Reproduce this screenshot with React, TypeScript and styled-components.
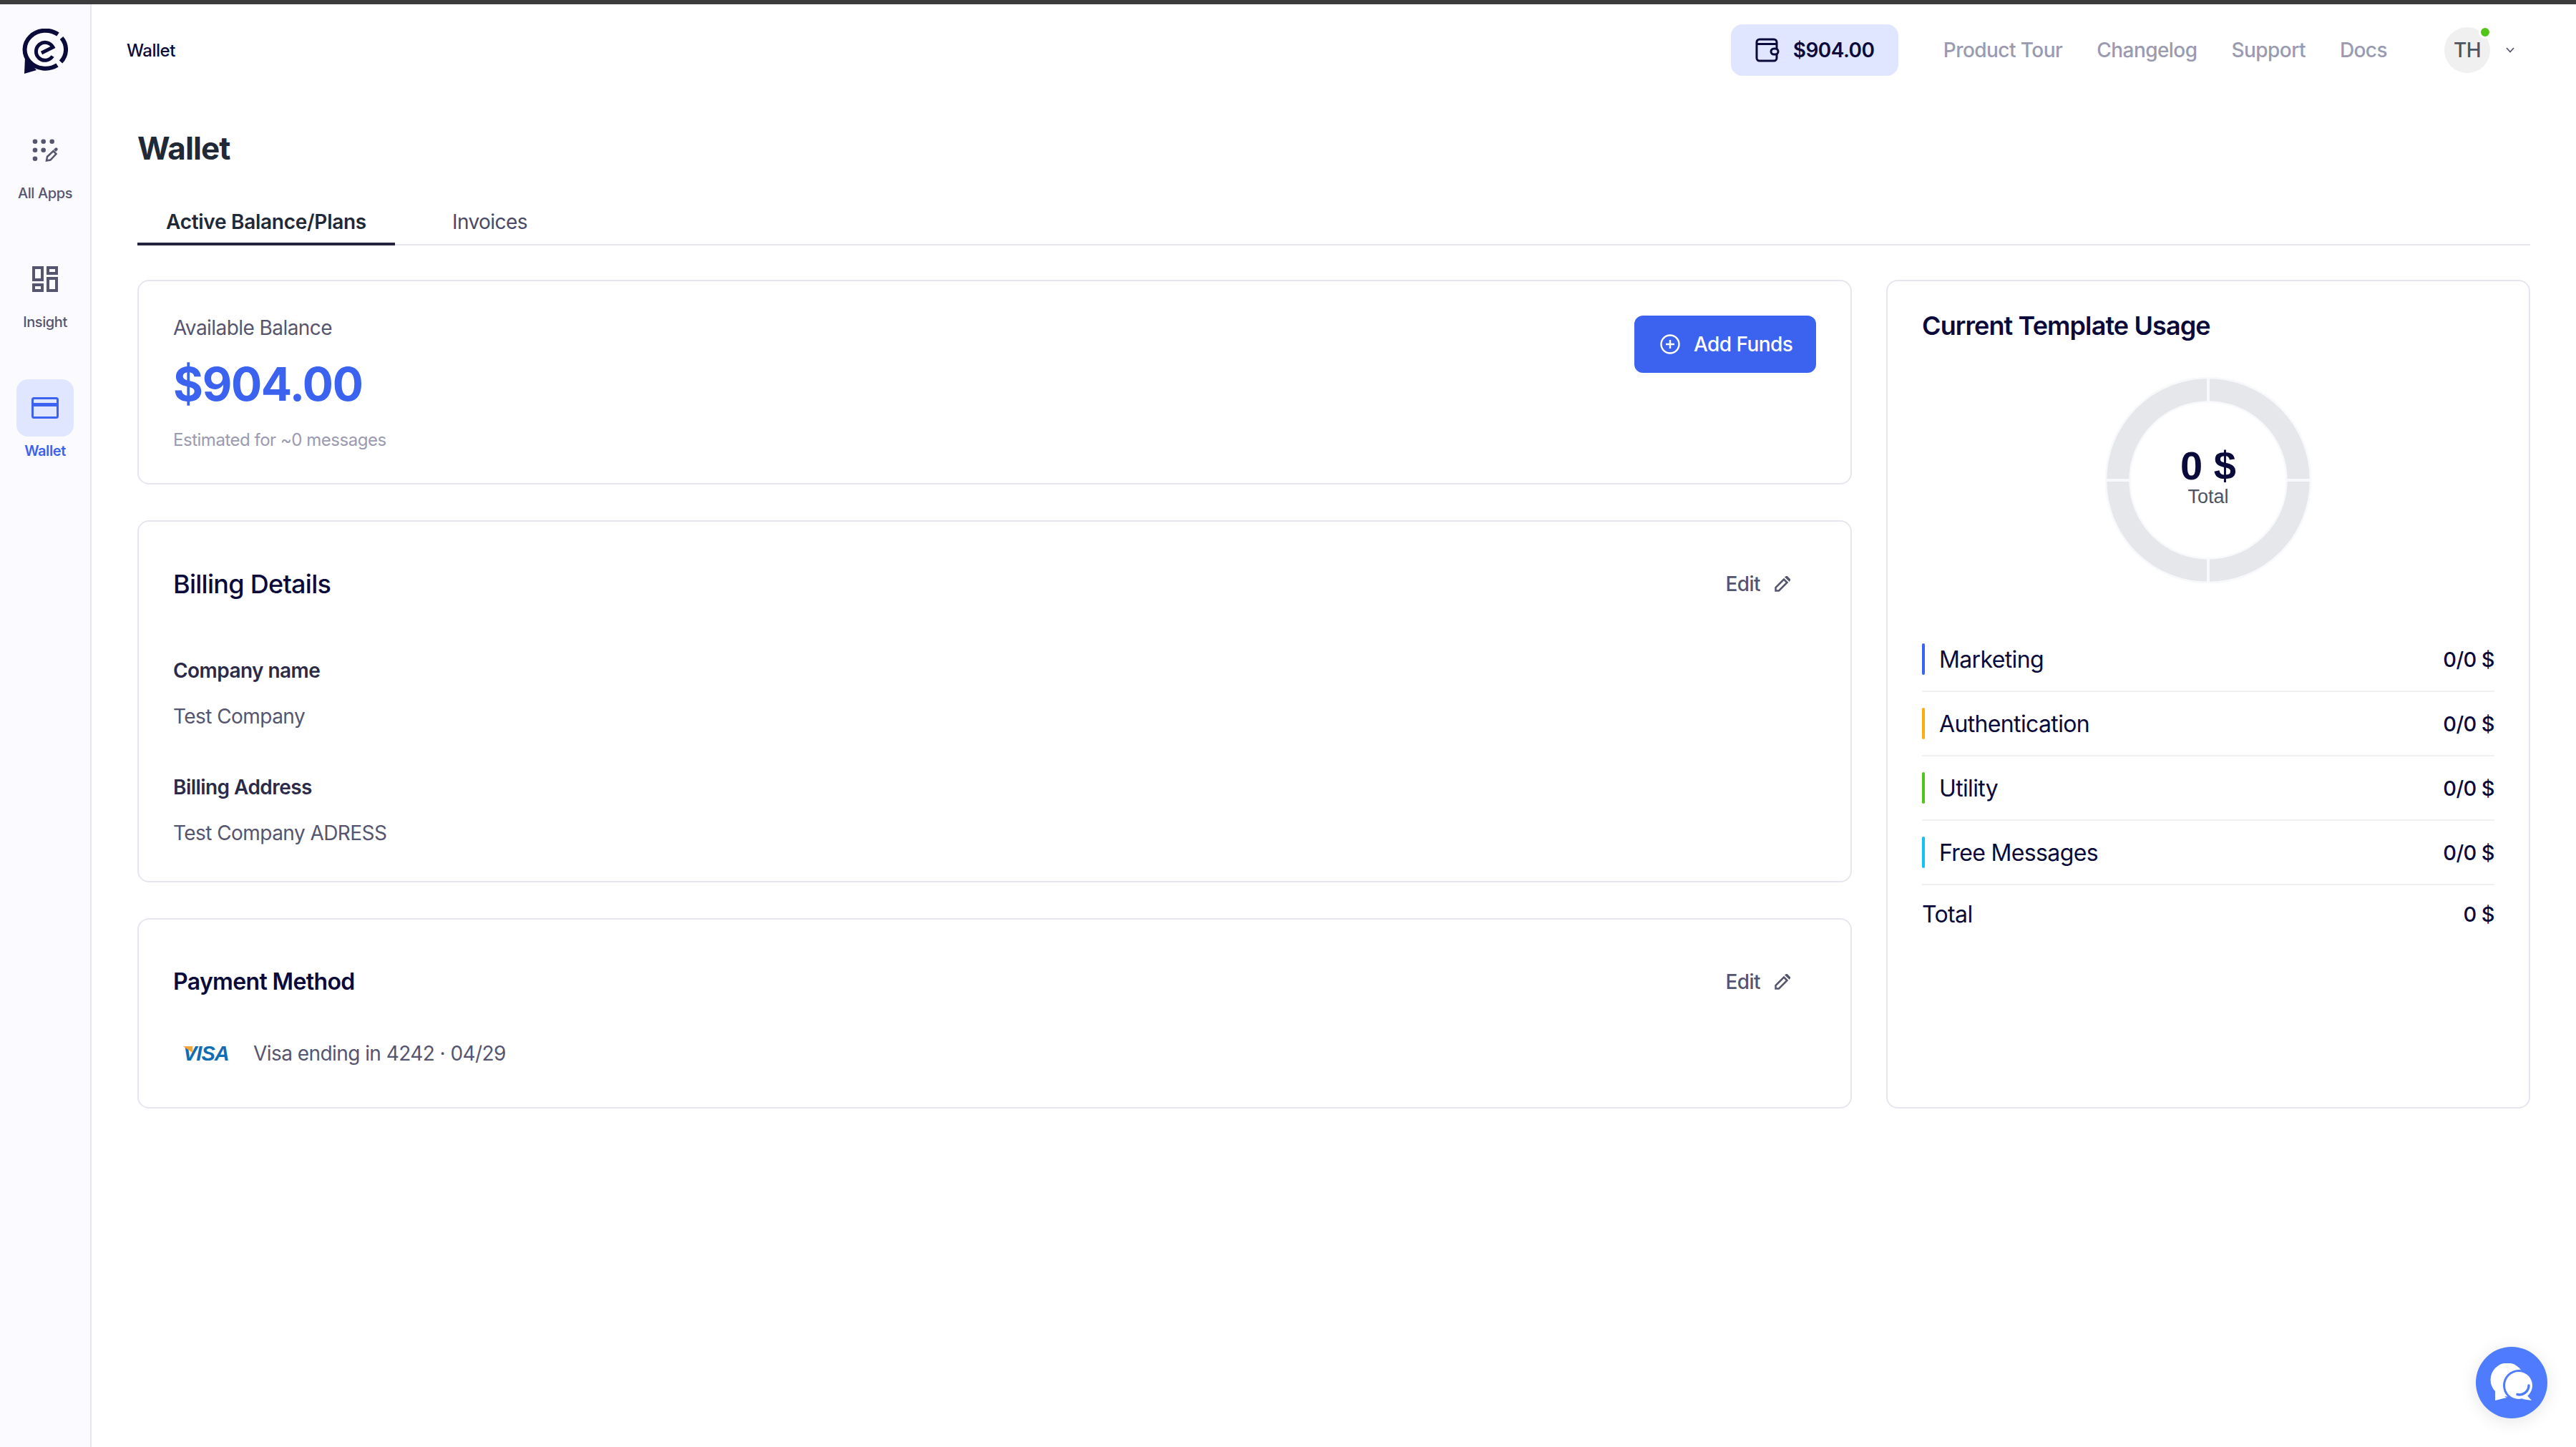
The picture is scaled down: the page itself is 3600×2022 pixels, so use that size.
import React from 'react'
import styled, { createGlobalStyle } from 'styled-components'

const GlobalStyle = createGlobalStyle`
  html, body {
    margin: 0;
    padding: 0;
    height: 100%;
    background: #fff;
    font-family: Inter, "Noto Sans", sans-serif;
    color: #0b0b3b;
  }
  * {
    box-sizing: border-box;
    letter-spacing: -0.02em;
  }
  #root { height: 100%; }
`

const Shell = styled.div`
  position: relative;
  display: flex;
  min-height: 2022px;
  border-top: 6px solid #3c3c3c;
`

const Sidebar = styled.aside`
  flex: 0 0 128px;
  display: flex;
  flex-direction: column;
  align-items: center;
  padding-top: 34px;
  background: #fafaff;
  border-right: 2px solid #e6e6ef;
`

const Logo = styled.svg`
  width: 64px;
  height: 64px;
  margin-bottom: 66px;
  color: #0b0b3b;
`

const SideItem = styled.a<{ $active?: boolean }>`
  display: flex;
  flex-direction: column;
  align-items: center;
  width: 80px;
  height: 180px;
  font-size: 20px;
  line-height: 24px;
  font-weight: ${p => (p.$active ? 600 : 500)};
  color: ${p => (p.$active ? '#3b63f0' : '#55556f')};
`

const SideIcon = styled.span<{ $active?: boolean }>`
  display: flex;
  align-items: center;
  justify-content: center;
  width: 80px;
  height: 80px;
  margin-bottom: 8px;
  border-radius: 16px;
  background: ${p => (p.$active ? '#e0e6ff' : 'transparent')};
`

const Main = styled.main`
  flex: 1;
  min-width: 0;
`

const TopBar = styled.header`
  display: flex;
  align-items: center;
  height: 128px;
  padding: 0 86px 0 49px;
`

const Crumb = styled.span`
  margin-right: auto;
  font-size: 24px;
  font-weight: 500;
`

const BalancePill = styled.div`
  display: flex;
  align-items: center;
  gap: 19px;
  width: 234px;
  height: 72px;
  padding-left: 34px;
  margin-right: 63px;
  border-radius: 16px;
  background: #e0e6ff;
  font-size: 28px;
  font-weight: 600;
`

const NavLinks = styled.nav`
  display: flex;
  gap: 48px;
  margin-right: 80px;
`

const NavLink = styled.a`
  font-size: 28px;
  font-weight: 500;
  color: #9a9ab0;
`

const UserMenu = styled.div`
  display: flex;
  align-items: center;
  gap: 22px;
`

const Avatar = styled.div`
  position: relative;
  display: flex;
  align-items: center;
  justify-content: center;
  width: 64px;
  height: 64px;
  border-radius: 50%;
  background: #f0f0f0;
  font-size: 28px;
  font-weight: 500;
  color: #4b5563;
`

const OnlineDot = styled.span`
  position: absolute;
  top: -2px;
  right: -2px;
  width: 18px;
  height: 18px;
  border: 3px solid #fff;
  border-radius: 50%;
  background: #52c41a;
`

const Content = styled.div`
  padding: 0 64px;
`

const Title = styled.h1`
  margin: 0;
  padding-top: 46px;
  font-size: 44px;
  line-height: 54px;
  font-weight: 700;
  color: #1f2937;
`

const Tabs = styled.div`
  display: flex;
  gap: 40px;
  margin-top: 58px;
  border-bottom: 2px solid #e6e6ef;
`

const Tab = styled.a<{ $active?: boolean }>`
  padding: 0 40px 11px;
  margin-bottom: -2px;
  font-size: 28px;
  line-height: 36px;
  font-weight: ${p => (p.$active ? 600 : 400)};
  letter-spacing: ${p => (p.$active ? '-0.01em' : '-0.02em')};
  color: ${p => (p.$active ? '#1f2937' : '#4a4a68')};
  border-bottom: 4px solid ${p => (p.$active ? '#23233f' : 'transparent')};
`

const Columns = styled.div`
  display: flex;
  gap: 48px;
  margin-top: 48px;
`

const LeftColumn = styled.div`
  flex: 1;
  min-width: 0;
  display: flex;
  flex-direction: column;
  gap: 50px;
`

const Card = styled.section`
  padding: 48px;
  background: #fff;
  border: 2px solid #e6e6ef;
  border-radius: 16px;
`

const BalanceCard = styled(Card)`
  display: flex;
  justify-content: space-between;
  align-items: flex-start;
  height: 286px;
`

const Label = styled.div`
  font-size: 28px;
  line-height: 34px;
  color: #55556f;
`

const Amount = styled.div`
  margin-top: 20px;
  font-size: 64px;
  line-height: 84px;
  font-weight: 700;
  color: #3b63f0;
`

const Estimate = styled.div`
  margin-top: 21px;
  font-size: 24px;
  line-height: 30px;
  color: #9a9ab0;
`

const PrimaryButton = styled.button`
  display: flex;
  align-items: center;
  gap: 19px;
  height: 80px;
  width: 254px;
  padding: 0 0 0 36px;
  border: 0;
  border-radius: 12px;
  background: #3b63f0;
  color: #fff;
  font-family: inherit;
  font-size: 28px;
  font-weight: 500;
`

const CardHead = styled.div<{ $gap?: number }>`
  display: flex;
  justify-content: space-between;
  align-items: center;
  padding-bottom: ${p => p.$gap ?? 0}px;
`

const CardTitle = styled.h2<{ $large?: boolean }>`
  margin: 0;
  font-size: ${p => (p.$large ? 36 : 32)}px;
  line-height: 44px;
  font-weight: ${p => (p.$large ? 500 : 600)};
`

const EditLink = styled.a`
  display: flex;
  align-items: center;
  gap: 20px;
  margin-right: 36px;
  font-size: 28px;
  font-weight: 500;
  color: #55556f;
`

const BillingCard = styled(Card)`
  height: 506px;
  padding-top: 65px;
`

const PaymentCard = styled(Card)`
  height: 266px;
  padding-top: 65px;
`

const FieldName = styled.div`
  margin-top: 63px;
  font-size: 28px;
  line-height: 36px;
  font-weight: 600;
  color: #2b2b48;
`

const FieldValue = styled.div`
  margin-top: 28px;
  font-size: 28px;
  line-height: 36px;
  color: #55556f;
`

const CardRow = styled.div`
  display: flex;
  align-items: center;
  gap: 34px;
  margin-top: 60px;
  padding-left: 14px;
  font-size: 28px;
  line-height: 36px;
  color: #55556f;
`

const VisaMark = styled.span`
  position: relative;
  display: block;
  width: 64px;
  font-family: "Liberation Sans", Arial, sans-serif;
  font-size: 29px;
  line-height: 24px;
  font-weight: 700;
  font-style: italic;
  letter-spacing: -1px;
  color: #0f6cb5;
  &::before {
    content: '';
    position: absolute;
    top: 2px;
    left: 0;
    width: 13px;
    height: 9px;
    background: #f4a63a;
    clip-path: polygon(0 0, 100% 0, 100% 100%);
  }
`

const UsageCard = styled(Card)`
  flex: 0 0 900px;
  display: flex;
  flex-direction: column;
  padding-top: 40px;
`

const UsageTitle = styled.h2`
  margin: 0;
  font-size: 36px;
  line-height: 44px;
  font-weight: 600;
  letter-spacing: -0.025em;
`

const Donut = styled.div`
  position: relative;
  align-self: center;
  width: 288px;
  height: 288px;
  margin: 50px 0 62px;
`

const DonutCentre = styled.div`
  position: absolute;
  inset: 0;
  display: flex;
  flex-direction: column;
  align-items: center;
  padding-top: 96px;
  font-family: "Liberation Sans", Arial, sans-serif;
`

const DonutValue = styled.div`
  font-size: 56px;
  line-height: 56px;
  font-weight: 700;
  letter-spacing: 0;
`

const DonutLabel = styled.div`
  margin-top: 2px;
  font-size: 27px;
  line-height: 26px;
  letter-spacing: 0;
  color: #4b5563;
`

const LegendRow = styled.div`
  display: flex;
  justify-content: space-between;
  align-items: center;
  height: 90px;
  border-bottom: 2px solid #f0f0f0;
  font-size: 32px;
  &:last-child {
    padding-bottom: 9px;
    border-bottom: 0;
  }
`

const LegendName = styled.div<{ $color?: string }>`
  display: flex;
  align-items: center;
  gap: 20px;
  &::before {
    content: '';
    display: ${p => (p.$color ? 'block' : 'none')};
    width: 4px;
    height: 44px;
    border-radius: 2px;
    background: ${p => p.$color};
  }
`

const LegendValue = styled.div`
  font-size: 29px;
  font-weight: 500;
`

const ChatBubble = styled.button`
  position: absolute;
  right: 40px;
  bottom: 40px;
  display: flex;
  align-items: center;
  justify-content: center;
  width: 100px;
  height: 100px;
  padding: 0;
  border: 0;
  border-radius: 50%;
  background: #4f7cff;
  box-shadow: 0 4px 24px rgba(0, 0, 0, 0.1);
`

const LogoMark = () => (
  <Logo viewBox="0 0 64 64" fill="none" stroke="currentColor">
    <path d="M50 8A29 26.500 0 1 0 49 51" strokeWidth="6" />
    <path d="M55 13A29 26.500 0 0 1 54 46.500" strokeWidth="6" />
    <path d="M4 40L3 63l17-5z" fill="currentColor" stroke="none" />
    <path d="M27 34L43 26A12.500 12.500 0 1 0 42.500 38.500" strokeWidth="5" />
  </Logo>
)

const AppsIcon = () => (
  <svg width="36" height="32" viewBox="0 0 36 32" fill="#55556f">
    <circle cx="4" cy="3.700" r="3.300" />
    <circle cx="15.700" cy="3.700" r="3.300" />
    <circle cx="27.700" cy="3.700" r="3.300" />
    <circle cx="4" cy="15.700" r="3.300" />
    <circle cx="15.700" cy="15.700" r="3.300" />
    <circle cx="4" cy="27.700" r="3.300" />
    <path d="M20 30.500l1-5.500 8.500-8 4 4-8 8.500z" fill="none" stroke="#55556f" strokeWidth="2.500" />
    <path d="M30 15l2-2c1-1 2-1 3 0s1 2 0 3l-2 2z" />
  </svg>
)

const InsightIcon = () => (
  <svg width="36" height="36" viewBox="0 0 36 36" fill="none" stroke="#55556f" strokeWidth="4">
    <rect x="2" y="2" width="12" height="17" />
    <rect x="22" y="2" width="12" height="8" />
    <rect x="2" y="26" width="12" height="8" />
    <rect x="22" y="17" width="12" height="17" />
  </svg>
)

const CardIcon = () => (
  <svg width="38" height="30" viewBox="0 0 38 30" fill="none" stroke="#3b63f0" strokeWidth="3">
    <rect x="1.500" y="1.500" width="35" height="27" rx="2" />
    <path d="M1.500 10.500h35" strokeWidth="5" />
  </svg>
)

const WalletIcon = () => (
  <svg width="34" height="34" viewBox="0 0 34 34" fill="none" stroke="#0b0b3b" strokeWidth="3">
    <rect x="2" y="2" width="28" height="30" rx="4" />
    <path d="M2 8.500h28" />
    <rect x="22" y="15" width="10" height="8" rx="4" fill="#e0e6ff" />
  </svg>
)

const PlusCircle = () => (
  <svg width="28" height="28" viewBox="0 0 28 28" fill="none" stroke="#fff" strokeWidth="2.400">
    <circle cx="14" cy="14" r="12.500" />
    <path d="M14 8v12M8 14h12" />
  </svg>
)

const Pencil = () => (
  <svg width="22" height="22" viewBox="0 0 22 22" fill="none" stroke="#55556f" strokeWidth="2.500">
    <path d="M1.500 20.500v-4.500L13 4.500l4.500 4.500L6 20.500z" />
    <path d="M16 1.500l1-.5 4 4-.5 1z" fill="#55556f" />
  </svg>
)

const Chevron = () => (
  <svg width="12" height="8" viewBox="0 0 12 8" fill="none" stroke="#55556f" strokeWidth="1.800">
    <path d="M1 1l5 5.500L11 1" />
  </svg>
)

const ChatIcon = () => (
  <svg width="60" height="54" viewBox="0 0 60 54" fill="#fff">
    <circle cx="24" cy="23" r="23.500" />
    <path d="M7 38L7 52l16-4z" />
    <circle cx="40" cy="31" r="22" fill="#4f7cff" />
    <circle cx="40" cy="31" r="19" />
    <path d="M50 43l8 9-13-2z" />
    <path d="M38 43.500A13 13 0 0 0 54 31" fill="none" stroke="#4f7cff" strokeWidth="3.500" strokeLinecap="round" />
  </svg>
)

const DonutChart = () => (
  <svg width="288" height="288" viewBox="0 0 288 288" fill="none">
    <circle cx="144" cy="144" r="126.500" stroke="#e5e7eb" strokeWidth="35" />
    <circle cx="144" cy="144" r="143" stroke="#f8f9fb" strokeWidth="2.500" />
    <circle cx="144" cy="144" r="109.500" stroke="#f8f9fb" strokeWidth="2.500" />
    <path d="M144 0v36M144 252v36M0 144h36M252 144h36" stroke="#f8f9fb" strokeWidth="4" />
  </svg>
)

const legend = [
  { name: 'Marketing', color: '#3b63f0', value: '0/0 $' },
  { name: 'Authentication', color: '#faad14', value: '0/0 $' },
  { name: 'Utility', color: '#52c41a', value: '0/0 $' },
  { name: 'Free Messages', color: '#13c2f0', value: '0/0 $' },
  { name: 'Total', value: '0 $' }
]

export default function App() {
  return (
    <>
      <GlobalStyle />
      <Shell>
        <Sidebar>
          <LogoMark />
          <SideItem>
            <SideIcon><AppsIcon /></SideIcon>
            All Apps
          </SideItem>
          <SideItem>
            <SideIcon><InsightIcon /></SideIcon>
            Insight
          </SideItem>
          <SideItem $active>
            <SideIcon $active><CardIcon /></SideIcon>
            Wallet
          </SideItem>
        </Sidebar>
        <Main>
          <TopBar>
            <Crumb>Wallet</Crumb>
            <BalancePill><WalletIcon />$904.00</BalancePill>
            <NavLinks>
              <NavLink>Product Tour</NavLink>
              <NavLink>Changelog</NavLink>
              <NavLink>Support</NavLink>
              <NavLink>Docs</NavLink>
            </NavLinks>
            <UserMenu>
              <Avatar>TH<OnlineDot /></Avatar>
              <Chevron />
            </UserMenu>
          </TopBar>
          <Content>
            <Title>Wallet</Title>
            <Tabs>
              <Tab $active>Active Balance/Plans</Tab>
              <Tab>Invoices</Tab>
            </Tabs>
            <Columns>
              <LeftColumn>
                <BalanceCard>
                  <div>
                    <Label>Available Balance</Label>
                    <Amount>$904.00</Amount>
                    <Estimate>Estimated for ~0 messages</Estimate>
                  </div>
                  <PrimaryButton><PlusCircle />Add Funds</PrimaryButton>
                </BalanceCard>
                <BillingCard>
                  <CardHead $gap={18}>
                    <CardTitle $large>Billing Details</CardTitle>
                    <EditLink>Edit <Pencil /></EditLink>
                  </CardHead>
                  <FieldName>Company name</FieldName>
                  <FieldValue>Test Company</FieldValue>
                  <FieldName>Billing Address</FieldName>
                  <FieldValue>Test Company ADRESS</FieldValue>
                </BillingCard>
                <PaymentCard>
                  <CardHead>
                    <CardTitle>Payment Method</CardTitle>
                    <EditLink>Edit <Pencil /></EditLink>
                  </CardHead>
                  <CardRow><VisaMark>VISA</VisaMark>Visa ending in 4242 · 04/29</CardRow>
                </PaymentCard>
              </LeftColumn>
              <UsageCard>
                <UsageTitle>Current Template Usage</UsageTitle>
                <Donut>
                  <DonutChart />
                  <DonutCentre>
                    <DonutValue>0 $</DonutValue>
                    <DonutLabel>Total</DonutLabel>
                  </DonutCentre>
                </Donut>
                {legend.map(row => (
                  <LegendRow key={row.name}>
                    <LegendName $color={row.color}>{row.name}</LegendName>
                    <LegendValue>{row.value}</LegendValue>
                  </LegendRow>
                ))}
              </UsageCard>
            </Columns>
          </Content>
        </Main>
        <ChatBubble><ChatIcon /></ChatBubble>
      </Shell>
    </>
  )
}
